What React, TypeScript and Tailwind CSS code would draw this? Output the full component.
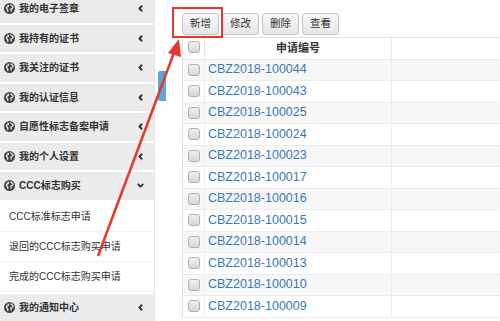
import { ChevronLeft, ChevronDown } from 'lucide-react';

const menus = ['我的电子签章', '我持有的证书', '我关注的证书', '我的认证信息', '自愿性标志备案申请', '我的个人设置'];
const subs = ['CCC标准标志申请', '退回的CCC标志购买申请', '完成的CCC标志购买申请'];
const codes = ['100044', '100043', '100025', '100024', '100023', '100017', '100016', '100015', '100014', '100013', '100010', '100009'];

function Globe() {
  return (
    <svg width="11" height="11" viewBox="0 0 16 16" className="shrink-0">
      <circle cx="8" cy="8" r="8" fill="#444" />
      <path d="M5 2.5c1.5 0.5 2 1.5 1 2.5s-2.5 0.5-2.5 2 1.5 1.5 2 3-0.5 3-0.5 3M10 2c-0.5 1.5 1 2 2 2.5s1.5 2 0.5 3-2.5 0.5-2.5 2 1 2 0.5 3" stroke="#eee" strokeWidth="1.8" fill="none" />
    </svg>
  );
}

function MenuItem({ label, open }: { label: string; open?: boolean }) {
  return (
    <div className="flex h-[28px] items-center gap-[4px] bg-[#ebebeb] pl-[4px] pr-[9px] text-[10px] font-semibold text-[#333]">
      <Globe />
      <span className="flex-1 whitespace-nowrap">{label}</span>
      {open ? <ChevronDown className="h-[9px] w-[9px]" strokeWidth={5} /> : <ChevronLeft className="h-[9px] w-[9px]" strokeWidth={5} />}
    </div>
  );
}

function Btn({ label }: { label: string }) {
  return (
    <div className="flex h-[22px] items-center rounded-[3px] border border-[#c4c4c4] bg-gradient-to-b from-[#f7f7f7] to-[#e6e6e6] px-[7px] text-[10.5px] text-[#333]">
      {label}
    </div>
  );
}

function Box() {
  return <div className="h-[12px] w-[12px] rounded-[3px] border border-[#b0b0b0] bg-gradient-to-b from-[#f0f0f0] to-[#d6d6d6]" />;
}

export default function App() {
  return (
    <div className="relative flex h-[321px] w-[500px] overflow-hidden bg-white" style={{ fontFamily: '"Liberation Sans", "Noto Sans CJK SC", sans-serif' }}>
      {/* Sidebar */}
      <div className="mt-[-5px] flex w-[154px] shrink-0 flex-col gap-[2px]">
        {menus.map((m) => (
          <MenuItem key={m} label={m} />
        ))}
        <MenuItem label="CCC标志购买" open />
        <div className="flex flex-col bg-white">
          {subs.map((s) => (
            <div key={s} className="flex h-[30px] items-center whitespace-nowrap border-b border-[#f0f0f0] pl-[9px] text-[10px] text-[#333]">
              {s}
            </div>
          ))}
        </div>
        <MenuItem label="我的通知中心" />
      </div>
      <div className="w-px shrink-0 bg-[#e6e6e6]" />

      {/* Toggle tab */}
      <div className="mt-[71px] ml-[3px] h-[30px] w-[8px] shrink-0 rounded-l-[2px] bg-[#5aa6e0]" />

      {/* Main */}
      <div className="ml-[16px] flex flex-1 flex-col pt-[13px]">
        <div className="flex gap-[3px]">
          <Btn label="新增" />
          <Btn label="修改" />
          <Btn label="删除" />
          <Btn label="查看" />
        </div>
        <div className="mt-[2px] border-l border-t border-[#e2e2e2]">
          <div className="flex h-[21.5px] items-center border-b border-[#e8e8e8]">
            <div className="flex w-[22px] items-start justify-center self-stretch border-r border-[#e8e8e8] pt-[3px]">
              <Box />
            </div>
            <div className="w-[186px] text-center text-[11px] font-bold text-[#333]">申请编号</div>
            <div className="flex-1 self-stretch border-l border-[#e8e8e8]" />
          </div>
          {codes.map((c, i) => (
            <div key={c} className={`flex h-[21.5px] items-center border-b border-[#ececec] ${i % 2 === 0 ? 'bg-[#f7f7f7]' : 'bg-white'}`}>
              <div className="flex w-[22px] items-center justify-center self-stretch border-r border-[#ececec]">
                <Box />
              </div>
              <div className="w-[186px] pl-[3px] text-[12.5px] text-[#3a78b8]">CBZ2018-{c}</div>
              <div className="flex-1 self-stretch border-l border-[#ececec]" />
            </div>
          ))}
        </div>
      </div>

      {/* Annotation overlay */}
      <div className="absolute left-[172px] top-[7px] h-[31px] w-[51px] border-2 border-[#e8352e]" />
      <svg className="pointer-events-none absolute left-0 top-0" width="500" height="321">
        <line x1="98" y1="256" x2="175" y2="50" stroke="#e8352e" strokeWidth="2.5" />
        <polygon points="179,39 168,53 181,57" fill="#e8352e" />
      </svg>
    </div>
  );
}
